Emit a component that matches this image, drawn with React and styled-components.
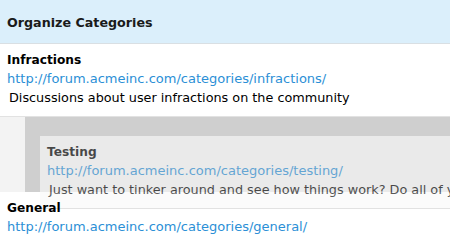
import styled, { createGlobalStyle } from "styled-components";

const GlobalStyle = createGlobalStyle`
    body {
        margin: 0;
        background: #fff;
        overflow: hidden;
        font-family: "DejaVu Sans", "Liberation Sans", sans-serif;
        font-size: 13px;
        color: #000;
    }
`

const Page = styled.div`
    position: relative;
    width: 450px;
    height: 235px;
    overflow: hidden;
`
const Header = styled.div`
    height: 44px;
    box-sizing: border-box;
    display: flex;
    align-items: center;
    padding: 2px 7px 0;
    background: #dbeffb;
    border-bottom: 1px solid #d9dfe3;
    font-size: 12.7px;
    font-weight: bold;
    color: #1a1a1a;
`
const Row = styled.div`
    position: relative;
    padding: 7px 7px 9px;
    border-bottom: 1px solid ${props => props.line ? "#e2e2e2" : "transparent"};
`
const Title = styled.div`
    font-size: 12.2px;
    font-weight: bold;
    line-height: 18px;
`
const Link = styled.a`
    display: block;
    line-height: 19px;
    color: #2b8fd6;
    text-decoration: none;
    white-space: nowrap;
`
const Desc = styled.div`
    margin-left: 2px;
    font-size: 12.8px;
    line-height: 19px;
    white-space: nowrap;
`
const Placeholder = styled.div`
    height: 75px;
    display: flex;
`
const Gutter = styled.div`
    width: 25px;
    background: #f3f3f3;
`
const Slot = styled.div`
    flex: 1;
    background: #cfcfcf;
`
const Helper = styled.div`
    position: absolute;
    left: 40px;
    top: 136px;
    width: 440px;
    padding: 7px 7px 9px;
    background: #f9f9f9;
    border-bottom: 1px solid #d4d4d4;
    opacity: 0.65;
`

const categories = [
    { name: "Infractions", slug: "infractions", desc: "Discussions about user infractions on the community" },
    { name: "Testing", slug: "testing", desc: "Just want to tinker around and see how things work? Do all of your testing here." },
    { name: "General", slug: "general", desc: "General discussion" },
]

const url = slug => `http://forum.acmeinc.com/categories/${slug}/`

const App = () => {
    const [infractions, testing, general] = categories
    return (
        <Page>
            <GlobalStyle />
            <Header>Organize Categories</Header>
            <Row line>
                <Title>{infractions.name}</Title>
                <Link href="#">{url(infractions.slug)}</Link>
                <Desc>{infractions.desc}</Desc>
            </Row>
            <Placeholder>
                <Gutter />
                <Slot />
            </Placeholder>
            <Helper>
                <Title>{testing.name}</Title>
                <Link href="#">{url(testing.slug)}</Link>
                <Desc>{testing.desc}</Desc>
            </Helper>
            <Row>
                <Title>{general.name}</Title>
                <Link href="#">{url(general.slug)}</Link>
                <Desc>{general.desc}</Desc>
            </Row>
        </Page>
    )
}
export default App
